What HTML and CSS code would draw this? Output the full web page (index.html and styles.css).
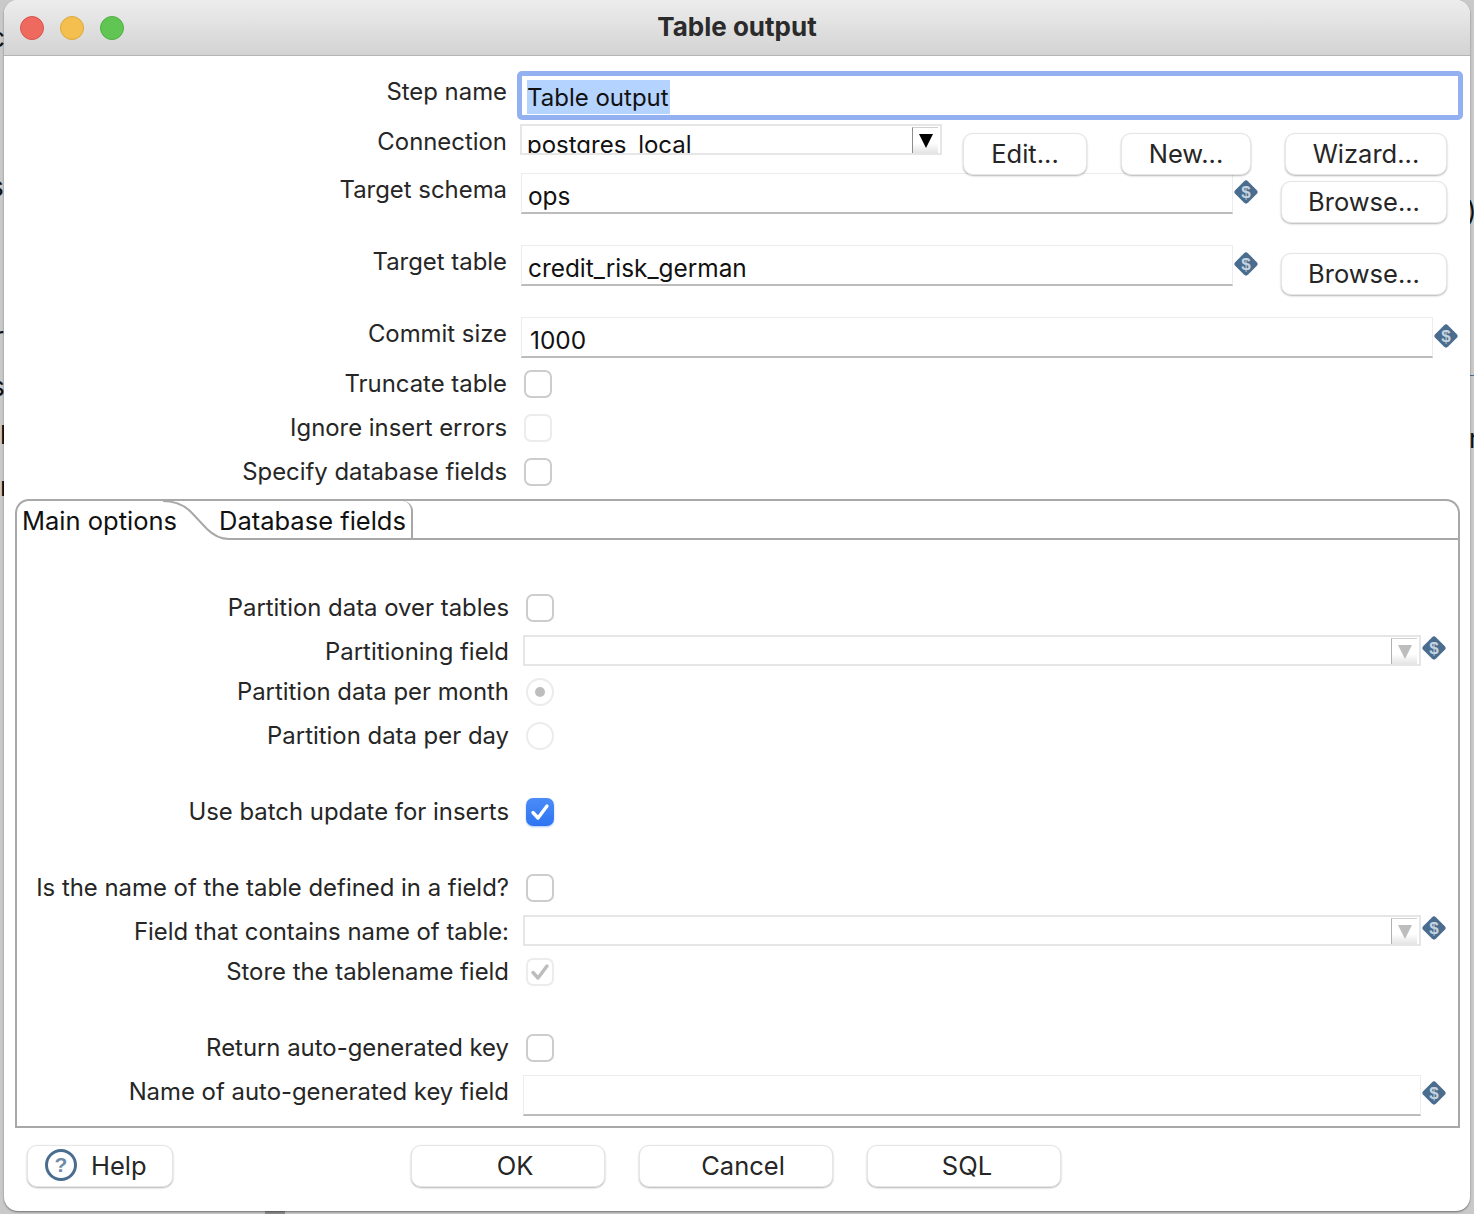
FILE: index.html
```html
<!DOCTYPE html>
<html lang="en">
<head>
    <meta charset="UTF-8">
    <meta name="viewport" content="width=device-width, initial-scale=1.0">
    <title>Table output</title>
    <link rel="stylesheet" href="styles.css">
</head>
<body>
    <svg class="defs" width="0" height="0">
        <symbol id="var" viewBox="0 0 26 26">
            <rect x="4" y="4" width="18" height="18" rx="3" transform="rotate(45 13 13)" fill="#4a6d8f"/>
            <text x="13" y="19" text-anchor="middle" class="var-text">$</text>
        </symbol>
    </svg>

    <!-- bits of the canvas behind the dialog -->
    <div class="behind b1">c</div>
    <div class="behind b2">s</div>
    <div class="behind b3">r</div>
    <div class="behind b4">s</div>
    <div class="behind b5">l</div>
    <div class="behind b6">r</div>
    <div class="behind b7">)</div>
    <div class="behind b8">r</div>
    <div class="behind-line"></div>
    <div class="behind-bar"></div>

    <div class="window">
        <div class="titlebar">
            <span class="dot red"></span>
            <span class="dot yellow"></span>
            <span class="dot green"></span>
            <div class="title">Table output</div>
        </div>

        <div class="form">
            <div class="row r-step">
                <label class="lbl">Step name</label>
                <div class="focus-field"><span class="selected">Table output</span></div>
            </div>
            <div class="row r-conn">
                <label class="lbl">Connection</label>
                <div class="combo conn-combo">
                    <span class="combo-text">postgres_local</span>
                    <span class="arrow-box"><i class="arrow"></i></span>
                </div>
                <button class="btn b-edit">Edit...</button>
                <button class="btn b-new">New...</button>
                <button class="btn b-wizard">Wizard...</button>
            </div>
            <div class="row r-tall">
                <label class="lbl">Target schema</label>
                <div class="field short">ops</div>
                <svg class="var"><use href="#var"/></svg>
                <button class="btn b-browse">Browse...</button>
            </div>
            <div class="row r-tall">
                <label class="lbl">Target table</label>
                <div class="field short">credit_risk_german</div>
                <svg class="var"><use href="#var"/></svg>
                <button class="btn b-browse">Browse...</button>
            </div>
            <div class="row r-commit">
                <label class="lbl">Commit size</label>
                <div class="field long">1000</div>
                <svg class="var"><use href="#var"/></svg>
            </div>
            <div class="row r-check">
                <label class="lbl lbl-mid">Truncate table</label>
                <span class="check"></span>
            </div>
            <div class="row r-check">
                <label class="lbl lbl-mid">Ignore insert errors</label>
                <span class="check off"></span>
            </div>
            <div class="row r-check r-last">
                <label class="lbl lbl-mid">Specify database fields</label>
                <span class="check"></span>
            </div>
        </div>

        <div class="panel">
            <div class="tabs">
                <div class="tab tab-main">Main options</div>
                <div class="tab tab-db">Database fields</div>
                <div class="tab-rest"></div>
                <svg class="tab-curve" width="70" height="42" viewBox="0 0 70 42">
                    <path d="M30 35 L50 35 C54 37 58 39 66 39 L66 42 L30 42 Z" fill="#fff"/>
                    <path d="M0 1 C14 1 22 6 28 12 L44 29 C50 35 56 39 66 39" fill="none" stroke="#a8a8a8" stroke-width="2"/>
                </svg>
            </div>
            <div class="tab-body">
                <div class="prow">
                    <label class="plbl">Partition data over tables</label>
                    <span class="check"></span>
                </div>
                <div class="prow p-combo">
                    <label class="plbl shift-down">Partitioning field</label>
                    <div class="combo wide-combo"><span class="arrow-box dim"><i class="arrow"></i></span></div>
                    <svg class="var"><use href="#var"/></svg>
                </div>
                <div class="prow">
                    <label class="plbl">Partition data per month</label>
                    <span class="radio on"></span>
                </div>
                <div class="prow">
                    <label class="plbl">Partition data per day</label>
                    <span class="radio"></span>
                </div>
                <div class="prow spaced">
                    <label class="plbl">Use batch update for inserts</label>
                    <span class="check blue">
                        <svg viewBox="0 0 28 28" width="28" height="28"><path d="M7 14.5 L12 20 L21 8" fill="none" stroke="#fff" stroke-width="3.4" stroke-linecap="round" stroke-linejoin="round"/></svg>
                    </span>
                </div>
                <div class="prow spaced">
                    <label class="plbl">Is the name of the table defined in a field?</label>
                    <span class="check"></span>
                </div>
                <div class="prow p-combo2">
                    <label class="plbl shift-down">Field that contains name of table:</label>
                    <div class="combo wide-combo"><span class="arrow-box dim"><i class="arrow"></i></span></div>
                    <svg class="var"><use href="#var"/></svg>
                </div>
                <div class="prow">
                    <label class="plbl">Store the tablename field</label>
                    <span class="check off">
                        <svg viewBox="0 0 28 28" width="28" height="28"><path d="M7 14.5 L12 20 L21 8" fill="none" stroke="#bdbdbd" stroke-width="3.4" stroke-linecap="round" stroke-linejoin="round"/></svg>
                    </span>
                </div>
                <div class="prow spaced">
                    <label class="plbl">Return auto-generated key</label>
                    <span class="check"></span>
                </div>
                <div class="prow p-key">
                    <label class="plbl shift-up">Name of auto-generated key field</label>
                    <div class="field key-field"></div>
                    <svg class="var"><use href="#var"/></svg>
                </div>
            </div>
        </div>

        <div class="footer">
            <button class="btn b-help">
                <svg class="help-icon" width="34" height="34" viewBox="0 0 34 34">
                    <circle cx="17" cy="17" r="14.5" fill="#fff" stroke="#4a6d8f" stroke-width="3"/>
                    <text x="17" y="24" text-anchor="middle" class="help-text">?</text>
                </svg>
                Help
            </button>
            <button class="btn b-ok">OK</button>
            <button class="btn b-foot b-cancel">Cancel</button>
            <button class="btn b-foot b-sql">SQL</button>
        </div>
    </div>
</body>
</html>
```

FILE: styles.css
```css
* {
    box-sizing: border-box;
}
html, body {
    height: 100%;
}
body {
    margin: 0;
    background: #c9c9c9;
    font-family: Inter, Roboto, "Liberation Sans", Arial, sans-serif;
    font-size: 23.9px;
    color: #262626;
    overflow: hidden;
    position: relative;
}
.defs {
    position: absolute;
}
.var-text {
    font-family: "Liberation Sans", Arial, sans-serif;
    font-size: 17px;
    font-weight: bold;
    fill: #c6d3df;
}

/* canvas behind */
.behind {
    position: absolute;
    color: #111;
    font-size: 26px;
    line-height: 30px;
}
.b1 { left: -10px; top: 23px; }
.b2 { left: -10px; top: 172px; }
.b3 { left: -6px; top: 322px; }
.b4 { left: -9px; top: 372px; }
.b5 { left: 0; top: 420px; }
.b6 { left: 0; top: 472px; }
.b7 { left: 1467px; top: 196px; }
.b8 { left: 1469px; top: 424px; }
.behind-line {
    position: absolute;
    left: 1470px;
    top: 375px;
    width: 4px;
    height: 1px;
    background: #4a6d8f;
}
.behind-bar {
    position: absolute;
    left: 265px;
    top: 1208px;
    width: 20px;
    height: 6px;
    background: #8e8e8e;
}

/* window */
.window {
    position: relative;
    margin-left: 4px;
    width: 1466px;
    height: 1211px;
    background: #fff;
    border-radius: 14px;
    box-shadow: 0 1px 2px rgba(0, 0, 0, 0.45);
}
.titlebar {
    height: 56px;
    display: flex;
    align-items: center;
    padding: 0 0 0 16px;
    gap: 16px;
    position: relative;
    background: linear-gradient(#ededed, #d3d3d3);
    border-bottom: 1px solid #b4b4b4;
    border-radius: 14px 14px 0 0;
}
.dot {
    width: 24px;
    height: 24px;
    border-radius: 50%;
    margin-top: 1px;
}
.red { background: #ee6a5f; border: 1px solid #d9534a; }
.yellow { background: #f5bf4f; border: 1px solid #dba73d; }
.green { background: #61c554; border: 1px solid #4fae44; }
.title {
    position: absolute;
    left: 0;
    right: 0;
    top: 11px;
    text-align: center;
    font-weight: bold;
    font-size: 26px;
    line-height: 32px;
    color: #2b2b2b;
}

/* upper form */
.form {
    padding-top: 15px;
}
.row {
    display: flex;
    align-items: flex-start;
}
.lbl {
    width: 503px;
    flex: none;
    text-align: right;
    line-height: 28px;
    margin-top: 3px;
}
.lbl-mid {
    margin-top: 0;
}
.r-step { height: 53px; }
.r-step .lbl { margin-top: 7px; }
.r-conn { height: 49px; }
.r-conn .lbl { margin-top: 4px; }
.r-tall { height: 72px; }
.r-commit { height: 53px; }
.r-check { height: 44px; }
.r-last { height: 41px; }

.focus-field {
    margin-left: 10px;
    width: 946px;
    height: 49px;
    border: 5px solid #93b1f0;
    border-radius: 5px;
    padding: 4px 0 0 5px;
    font-size: 24px;
    line-height: 32px;
    color: #111;
}
.selected {
    display: inline-block;
    padding-top: 2px;
    padding-right: 1px;
    background: #b5d3ff;
}
.combo {
    border: 2px solid #e6e6e6;
    background: #fff;
    position: relative;
    flex: none;
}
.conn-combo {
    margin-left: 13px;
    width: 422px;
    height: 31px;
    padding-left: 5px;
    overflow: hidden;
}
.combo-text {
    display: block;
    font-size: 24px;
    line-height: 38px;
    color: #111;
}
.arrow-box {
    position: absolute;
    right: 2px;
    top: 1px;
    width: 26px;
    height: 26px;
    border-left: 1px solid #8c8c8c;
    border-top: 1px solid #d0d0d0;
    background: linear-gradient(#fff 60%, #e4e4e4);
    display: flex;
    justify-content: center;
    padding-top: 6px;
}
.arrow {
    width: 0;
    height: 0;
    border-left: 7px solid transparent;
    border-right: 7px solid transparent;
    border-top: 14px solid #000;
}
.dim {
    border-left-color: #b0b0b0;
}
.dim .arrow {
    border-top-color: #bdbdbd;
}
.field {
    flex: none;
    height: 41px;
    background: #fff;
    border: 1px solid #ececec;
    border-bottom: 2px solid #bcbcbc;
    padding-left: 6px;
    font-size: 24.4px;
    line-height: 44px;
    color: #111;
}
.short {
    margin-left: 14px;
    width: 712px;
}
.long {
    margin-left: 14px;
    width: 912px;
    padding-left: 8px;
}
.var {
    width: 26px;
    height: 26px;
    flex: none;
    margin: 6px 0 0 0;
}
.btn {
    position: relative;
    z-index: 1;
    flex: none;
    height: 42px;
    background: #fff;
    border: 1px solid #e6e6e6;
    border-radius: 10px;
    box-shadow: 0 1px 2px rgba(0, 0, 0, 0.3);
    font-family: inherit;
    font-size: 25.5px;
    color: #262626;
    padding: 0 0 2px;
}
.b-edit { margin: 9px 0 0 21px; width: 124px; }
.b-new { margin: 9px 0 0 34px; width: 130px; }
.b-wizard { margin: 9px 0 0 34px; width: 162px; }
.b-browse { margin: 8px 0 0 22px; width: 166px; }
.r-commit .var { margin-left: 0; }

/* checks */
.check, .radio {
    flex: none;
    display: block;
    width: 28px;
    height: 28px;
    background: #fff;
    border: 2px solid #cdcdcd;
    border-radius: 7px;
    margin-left: 17px;
    position: relative;
}
.check svg {
    position: absolute;
    left: -2px;
    top: -2px;
}
.off {
    border-color: #ececec;
}
.blue {
    border: none;
    background: linear-gradient(#4a8cf7, #2f74f2);
    box-shadow: 0 1px 2px rgba(47, 116, 242, 0.4);
}
.blue svg {
    left: 0;
    top: 0;
}
.radio {
    border-radius: 50%;
    border-color: #ececec;
}
.radio.on::after {
    content: "";
    position: absolute;
    left: 7px;
    top: 7px;
    width: 10px;
    height: 10px;
    border-radius: 50%;
    background: #bdbdbd;
}

/* tab panel */
.panel {
    margin-left: 11px;
    width: 1445px;
    height: 629px;
    border: 2px solid #a8a8a8;
    border-radius: 14px 14px 0 0;
    background: #fff;
}
.tabs {
    display: flex;
    height: 39px;
    position: relative;
    font-size: 25.5px;
    color: #111;
}
.tab {
    line-height: 40px;
    flex: none;
}
.tab-main {
    width: 182px;
    padding-left: 5px;
}
.tab-db {
    width: 214px;
    padding-left: 20px;
    border-right: 2px solid #a8a8a8;
    border-bottom: 2px solid #a8a8a8;
    border-radius: 0 10px 0 0;
}
.tab-rest {
    flex: 1;
    border-bottom: 2px solid #a8a8a8;
}
.tab-curve {
    position: absolute;
    left: 146px;
    top: -1px;
}
.tab-body {
    padding-top: 46px;
}
.prow {
    display: flex;
    align-items: center;
    height: 44px;
}
.plbl {
    width: 492px;
    flex: none;
    text-align: right;
    padding-bottom: 2px;
}
.shift-down {
    position: relative;
    top: 2px;
}
.shift-up {
    position: relative;
    top: -3px;
}
.spaced {
    margin-top: 32px;
}
.p-combo, .p-combo2 {
    height: 40px;
}
.wide-combo {
    margin-left: 14px;
    width: 898px;
    height: 31px;
}
.prow .var {
    margin: 0;
    position: relative;
    top: -2px;
}
.p-key {
    height: 50px;
}
.key-field {
    margin-left: 14px;
    width: 898px;
}

/* footer */
.footer {
    display: flex;
    padding: 17px 0 0 23px;
}
.b-help {
    width: 146px;
    display: flex;
    align-items: center;
    padding-left: 16px;
    gap: 13px;
}
.help-text {
    font-family: "Liberation Sans", Arial, sans-serif;
    font-size: 21px;
    font-weight: bold;
    fill: #6f8ba6;
}
.b-ok {
    margin-left: 238px;
    width: 194px;
    padding-left: 14px;
}
.b-foot {
    margin-left: 34px;
    width: 194px;
}
.b-cancel {
    padding-left: 14px;
}
.b-sql {
    padding-left: 6px;
}
```
